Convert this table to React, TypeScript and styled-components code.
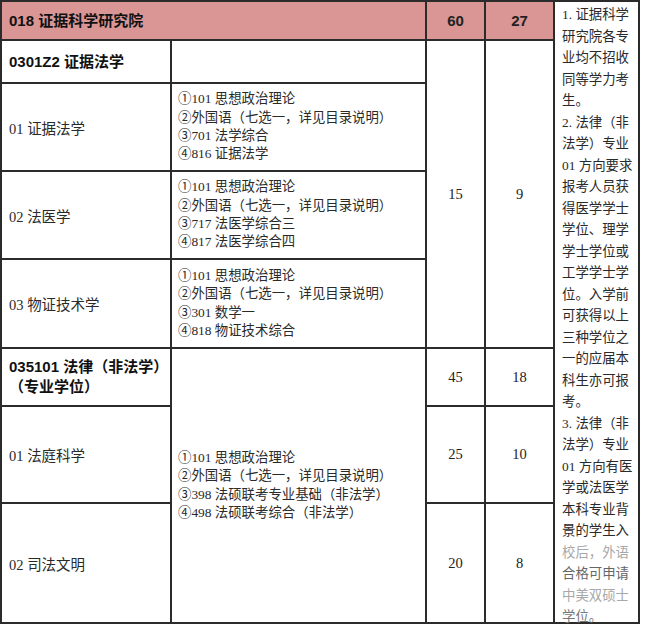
import React from "react";
import styled, { createGlobalStyle } from "styled-components";

const GlobalStyle = createGlobalStyle`
  html, body {
    margin: 0;
    padding: 0;
    background: #fff;
  }
  body {
    font-family: "Liberation Serif", "Noto Sans CJK SC", serif;
    color: #222;
  }
`;

const LINE = "2px solid #2b2b2b";

const Sheet = styled.div`
  display: grid;
  width: 640px;
  grid-template-columns: 170px 255px 59px 69px 85px;
  grid-template-rows: 39px 43px 88px 88px 89px 58px 97px 120px;
  border-top: ${LINE};
  border-left: ${LINE};
  box-sizing: border-box;
`;

const Cell = styled.div<{ $col: string; $row: string; $pink?: boolean }>`
  grid-column: ${(p) => p.$col};
  grid-row: ${(p) => p.$row};
  border-right: ${LINE};
  border-bottom: ${LINE};
  background: ${(p) => (p.$pink ? "#d99694" : "#fff")};
  display: flex;
  align-items: center;
  box-sizing: border-box;
  min-width: 0;
`;

const TitleCell = styled(Cell)`
  padding-left: 7px;
  font-family: "Liberation Sans", "Noto Sans CJK SC", sans-serif;
  font-weight: 700;
  font-size: 15px;
  line-height: 20px;
  color: #111;
`;

const NameCell = styled(Cell)`
  padding-left: 7px;
  font-size: 14.5px;
  color: #2a2a2a;
`;

const CourseCell = styled(Cell)`
  flex-direction: column;
  align-items: flex-start;
  justify-content: center;
  padding-left: 6px;
  font-size: 13.4px;
  color: #2a2a2a;
  white-space: nowrap;
`;

const CourseLine = styled.div`
  height: 18.3px;
  line-height: 18.3px;
`;

const Mark = styled.span`
  display: inline-block;
  width: 1em;
  line-height: 1;
  text-align: left;
  font-family: "Noto Sans CJK SC", sans-serif;
`;

const CountCell = styled(Cell)<{ $bold?: boolean }>`
  justify-content: center;
  font-size: ${(p) => (p.$bold ? "15px" : "14.5px")};
  font-weight: ${(p) => (p.$bold ? 700 : 400)};
  font-family: ${(p) =>
    p.$bold
      ? `"Liberation Sans", "Noto Sans CJK SC", sans-serif`
      : `"Liberation Serif", "Noto Sans CJK SC", serif`};
  color: #222;
`;

const NoteCell = styled(Cell)`
  flex-direction: column;
  align-items: flex-start;
  justify-content: flex-start;
  padding: 2px 0 0 7px;
  font-size: 13.4px;
  line-height: 21.5px;
  white-space: nowrap;
`;

const NoteLine = styled.div<{ $tone?: string }>`
  color: ${(p) => p.$tone || "#2a2a2a"};
`;

const noteLines: [string, string?][] = [
  ["1. 证据科学"],
  ["研究院各专"],
  ["业均不招收"],
  ["同等学力考"],
  ["生。"],
  ["2. 法律（非"],
  ["法学）专业"],
  ["01 方向要求"],
  ["报考人员获"],
  ["得医学学士"],
  ["学位、理学"],
  ["学士学位或"],
  ["工学学士学"],
  ["位。入学前"],
  ["可获得以上"],
  ["三种学位之"],
  ["一的应届本"],
  ["科生亦可报"],
  ["考。"],
  ["3. 法律（非"],
  ["法学）专业"],
  ["01 方向有医"],
  ["学或法医学"],
  ["本科专业背"],
  ["景的学生入"],
  ["校后，外语", "#a8a8a8"],
  ["合格可申请", "#666"],
  ["中美双硕士", "#a8a8a8"],
  ["学位。", "#777"],
];

const marks = ["①", "②", "③", "④"];

const academic = [
  {
    row: "3",
    name: "01 证据法学",
    courses: ["101 思想政治理论", "外国语（七选一，详见目录说明）", "701 法学综合", "816 证据法学"],
  },
  {
    row: "4",
    name: "02 法医学",
    courses: ["101 思想政治理论", "外国语（七选一，详见目录说明）", "717 法医学综合三", "817 法医学综合四"],
  },
  {
    row: "5",
    name: "03 物证技术学",
    courses: ["101 思想政治理论", "外国语（七选一，详见目录说明）", "301 数学一", "818 物证技术综合"],
  },
];

const lawCourses = [
  "101 思想政治理论",
  "外国语（七选一，详见目录说明）",
  "398 法硕联考专业基础（非法学）",
  "498 法硕联考综合（非法学）",
];

const lawRows = [
  { row: "7", name: "01 法庭科学", plan: "25", free: "10" },
  { row: "8", name: "02 司法文明", plan: "20", free: "8" },
];

function CourseList({ items }: { items: string[] }) {
  return (
    <>
      {items.map((c, i) => (
        <CourseLine key={c}>
          <Mark>{marks[i]}</Mark>
          {c}
        </CourseLine>
      ))}
    </>
  );
}

export default function App() {
  return (
    <>
      <GlobalStyle />
      <Sheet>
        <TitleCell $col="1 / 3" $row="1" $pink>
          018 证据科学研究院
        </TitleCell>
        <CountCell $col="3" $row="1" $pink $bold>
          60
        </CountCell>
        <CountCell $col="4" $row="1" $pink $bold>
          27
        </CountCell>
        <NoteCell $col="5" $row="1 / 9">
          {noteLines.map(([text, tone], i) => (
            <NoteLine key={i} $tone={tone}>
              {text}
            </NoteLine>
          ))}
        </NoteCell>

        <TitleCell $col="1" $row="2">
          0301Z2 证据法学
        </TitleCell>
        <Cell $col="2" $row="2" />
        <CountCell $col="3" $row="2 / 6">
          15
        </CountCell>
        <CountCell $col="4" $row="2 / 6">
          9
        </CountCell>

        {academic.map((a) => (
          <React.Fragment key={a.row}>
            <NameCell $col="1" $row={a.row}>
              {a.name}
            </NameCell>
            <CourseCell $col="2" $row={a.row}>
              <CourseList items={a.courses} />
            </CourseCell>
          </React.Fragment>
        ))}

        <TitleCell $col="1" $row="6">
          035101 法律（非法学）
          <br />
          （专业学位）
        </TitleCell>
        <CourseCell $col="2" $row="6 / 9">
          <CourseList items={lawCourses} />
        </CourseCell>
        <CountCell $col="3" $row="6">
          45
        </CountCell>
        <CountCell $col="4" $row="6">
          18
        </CountCell>

        {lawRows.map((r) => (
          <React.Fragment key={r.row}>
            <NameCell $col="1" $row={r.row}>
              {r.name}
            </NameCell>
            <CountCell $col="3" $row={r.row}>
              {r.plan}
            </CountCell>
            <CountCell $col="4" $row={r.row}>
              {r.free}
            </CountCell>
          </React.Fragment>
        ))}
      </Sheet>
    </>
  );
}
